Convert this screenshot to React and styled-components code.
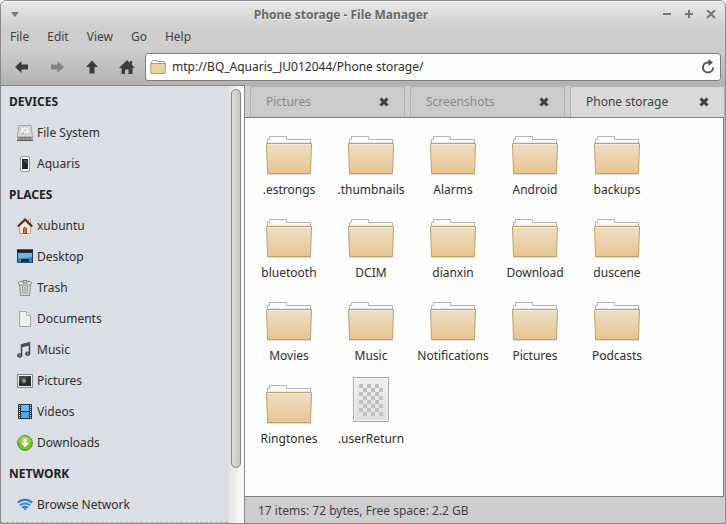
import React, { useState } from 'react';
import styled, { createGlobalStyle } from 'styled-components';

const GlobalStyle = createGlobalStyle`
  * {
    box-sizing: border-box;
  }
  body {
    margin: 0;
    background: #fff;
    font-family: 'Noto Sans', 'Open Sans', sans-serif;
    font-size: 12px;
    line-height: 18px;
    color: #2d2d2d;
  }
  button, input {
    font: inherit;
    color: inherit;
    border: 0;
    padding: 0;
    margin: 0;
    background: none;
  }
  svg {
    display: block;
    flex: none;
  }
`;

const places = [
  {
    title: 'DEVICES',
    items: [
      ['File System', 'disk'],
      ['Aquaris', 'phone'],
    ],
  },
  {
    title: 'PLACES',
    items: [
      ['xubuntu', 'home'],
      ['Desktop', 'desktop'],
      ['Trash', 'trash'],
      ['Documents', 'document'],
      ['Music', 'music'],
      ['Pictures', 'picture'],
      ['Videos', 'video'],
      ['Downloads', 'download'],
    ],
  },
  { title: 'NETWORK', items: [['Browse Network', 'wifi']] },
];

const folders = [
  '.estrongs',
  '.thumbnails',
  'Alarms',
  'Android',
  'backups',
  'bluetooth',
  'DCIM',
  'dianxin',
  'Download',
  'duscene',
  'Movies',
  'Music',
  'Notifications',
  'Pictures',
  'Podcasts',
  'Ringtones',
];

const placeIcons = {
  disk: (
    <>
      <path d="M2 .5h12l1.500 10.500v3.500H.5V11z" fill="#dcdcda" stroke="#a3a3a1" />
      <ellipse cx="8" cy="5.500" rx="5" ry="3.800" fill="#f2f2f2" stroke="#c4c4c2" />
      <circle cx="8.500" cy="5" r="1" fill="#bbb" />
      <path d="M7.500 6L4 9.500h3z" fill="#b0b0b0" />
      <path d="M1 11.500h14V15H1z" fill="#9a9a98" />
      <path d="M2 13h8M11 13h3" stroke="#6b6b6b" />
      <path d="M0 15.500h16" stroke="#555" />
    </>
  ),
  phone: (
    <>
      <rect x="3.500" y=".5" width="9" height="15" rx="1.500" fill="#fafafa" stroke="#9b9da0" />
      <rect x="5" y="3" width="6" height="10" fill="#232527" />
      <path d="M6 4h4v4z" fill="#55585a" />
    </>
  ),
  home: (
    <>
      <path d="M11.500 1.500h2V6h-2z" fill="#f3e6dc" stroke="#c79f88" />
      <path d="M2.500 8L8 3l5.500 5v7.500h-11z" fill="#f7ebdd" stroke="#c2a28c" />
      <path d="M.8 8.500L8 1.500l7.200 7" fill="none" stroke="#6e2023" strokeWidth="2" />
      <path d="M6.500 15.500V11q0-1.500 1.500-1.500T9.500 11v4.500z" fill="#d07c3c" stroke="#8d4a22" />
    </>
  ),
  desktop: (
    <>
      <rect width="16" height="14" rx="1" fill="#1d3a58" />
      <path d="M1 4h14v9H1z" fill="#4181b3" />
      <path d="M1 4h14v4q-7 2-14 1z" fill="#74b0d6" />
      <path d="M0 0h16v3H0z" fill="#1b1d1f" />
      <path d="M0 .5h16" stroke="#55595d" />
      <path d="M4 10h8v3H4z" fill="#1b2d40" />
      <path d="M0 13.500h16" stroke="#28517b" />
    </>
  ),
  trash: (
    <>
      <path d="M2.500 4h11l-1 11.500h-9z" fill="#d8d8d8" stroke="#8f8f8f" />
      <path d="M5.500 6l.5 8M8 6v8M10.500 6l-.5 8" stroke="#9a9a9a" />
      <rect x="1.500" y="1.500" width="13" height="3.500" rx="1.700" fill="#ececec" stroke="#858585" />
      <path d="M6 3V.6h4V3z" fill="#ddd" stroke="#777" />
    </>
  ),
  document: (
    <>
      <path d="M2.500.5h7l4 4v11h-11z" fill="#f1f1ef" stroke="#a2a2a2" />
      <path d="M9.500.5v4h4z" fill="#fff" stroke="#b5b5b5" />
    </>
  ),
  music: (
    <>
      <path d="M4.500 13V3L12.500 1v10" fill="none" stroke="#3c3f41" strokeWidth="1.400" />
      <path d="M4 2.200L13 0v3.500L4 5.600z" fill="#4c4f51" />
      <ellipse cx="2.700" cy="13.500" rx="2.200" ry="1.700" fill="#777" stroke="#333" />
      <ellipse cx="10.700" cy="11.700" rx="2.200" ry="1.700" fill="#777" stroke="#333" />
    </>
  ),
  picture: (
    <>
      <rect x=".5" y="1.500" width="15" height="13" fill="#f5f5f5" stroke="#898989" />
      <rect x="2" y="3" width="12" height="10" fill="#292b2d" />
      <path d="M2 3h12L2 9z" fill="#47494b" />
      <path d="M7 5.500v5M4.500 8h5M5.300 6.300l3.400 3.400M8.700 6.300L5.300 9.700" stroke="#a5a5a5" />
    </>
  ),
  video: (
    <>
      <rect x="1" y="0" width="14" height="15" fill="#263340" />
      <path d="M4 1h8v6H4z" fill="#6ab9f1" />
      <path d="M4 8h8v6H4z" fill="#51a4e5" />
      <path d="M2.500 1v13M13.500 1v13" stroke="#e4edf2" strokeDasharray="1 1" />
    </>
  ),
  download: (
    <>
      <circle cx="8" cy="8" r="7.400" fill="#70bf2b" stroke="#4b9317" />
      <path d="M1.500 7a6.500 6 0 0 1 13 0q-6 2-13 0z" fill="#91d64d" />
      <path d="M6.500 3.500h3V8h2.700L8 12.300 3.800 8h2.700z" fill="#fff" />
    </>
  ),
  wifi: (
    <g fill="none" stroke="#347fbd" strokeWidth="2.200">
      <path d="M.8 5.700q7.200-6 14.400 0" />
      <path d="M3 8.400q5-4.200 10 0" stroke="#4695d0" />
      <path d="M5.200 10.800q2.800-2.500 5.600 0" />
      <path d="M6.400 11.700q1.600-1.500 3.200 0L8 13.500z" fill="#347fbd" stroke="none" />
    </g>
  ),
};

function PlaceIcon({ name }) {
  return (
    <svg width="16" height="16" viewBox="0 0 16 16" aria-hidden="true">
      {placeIcons[name]}
    </svg>
  );
}

function FolderIcon() {
  return (
    <svg width="48" height="48" viewBox="0 0 48 48" aria-hidden="true">
      <defs>
        <linearGradient id="folder" x1="0" y1="0" x2="0" y2="1">
          <stop offset="0" stopColor="#eedfc6" />
          <stop offset="1" stopColor="#e8c590" />
        </linearGradient>
      </defs>
      <path d="M2 47.500h44" stroke="#ddd" />
      <path d="M2.500 17v-4.500h2v-3h17v3h24V17z" fill="#fbfbfb" stroke="#b5b5b8" />
      <path d="M3 15.500h42" stroke="#eaeaea" />
      <path d="M1.500 16.500h45l-1 30h-43z" fill="url(#folder)" stroke="#bea06b" />
      <path d="M2.500 17.500h43" stroke="#f6ebd8" />
    </svg>
  );
}

function SmallFolderIcon() {
  return (
    <svg width="16" height="16" viewBox="0 0 16 16" aria-hidden="true">
      <path d="M1.500 5V2.500h1v-1h5v1h7V5z" fill="#fff" stroke="#a9a9a9" />
      <path d="M.5 4.500h15l-.5 10H1z" fill="#ecd1a6" stroke="#bd9c68" />
    </svg>
  );
}

function UnknownFileIcon() {
  const squares = [];
  for (let y = 0; y < 8; y++) {
    for (let x = y % 2; x < 6; x += 2) {
      squares.push(
        <rect key={`${x}-${y}`} x={12 + x * 4} y={8 + y * 4} width="4" height="4" />,
      );
    }
  }
  return (
    <svg width="48" height="48" viewBox="0 0 48 48" aria-hidden="true">
      <defs>
        <linearGradient id="paper" x1="0" y1="0" x2="0" y2="1">
          <stop offset="0" stopColor="#f1f1f1" />
          <stop offset="1" stopColor="#dedede" />
        </linearGradient>
      </defs>
      <rect x="6.500" y="1.500" width="35" height="44" fill="url(#paper)" stroke="#a6a6a6" />
      <rect x="7.500" y="2.500" width="33" height="42" fill="none" stroke="#f8f8f8" />
      <g fill="#c0c0c0">{squares}</g>
    </svg>
  );
}

const toolIcons = {
  Back: 'M1 8l6.500-6v3.500H14v5H7.500V14z',
  Forward: 'M15 8L8.500 2v3.500H2v5h6.500V14z',
  Up: 'M8 1.500L14 8h-3.500v6.500h-5V8H2z',
  Home: 'M8 1L0 9h2.500v6H6v-4.500h3.500V15h4V9H16l-3-3.200V2h-2v2z',
};

function ToolIcon({ name }) {
  return (
    <svg width="16" height="16" viewBox="0 0 16 16" fill="currentColor" aria-hidden="true">
      <path d={toolIcons[name]} />
    </svg>
  );
}

function CloseIcon() {
  return (
    <svg width="10" height="10" viewBox="0 0 10 10" aria-hidden="true">
      <path d="M1.500 1.500l7 7M8.500 1.500l-7 7" stroke="currentColor" strokeWidth="3" />
    </svg>
  );
}

export default function App() {
  const [path, setPath] = useState('mtp://BQ_Aquaris_JU012044/Phone storage/');
  const [activeTab, setActiveTab] = useState('Phone storage');

  return (
    <>
      <GlobalStyle />
      <Window>
        <Header>
          <TitleBar>
            <WindowButton aria-label="Window menu">
              <svg width="10" height="10" viewBox="0 0 10 10">
                <path d="M1 2h8L5 7z" fill="currentColor" />
              </svg>
            </WindowButton>
            <Title>Phone storage - File Manager</Title>
            <WindowButton aria-label="Minimize">
              <svg width="10" height="10" viewBox="0 0 10 10">
                <path d="M1 4h8" stroke="currentColor" strokeWidth="2" />
              </svg>
            </WindowButton>
            <WindowButton aria-label="Maximize">
              <svg width="10" height="10" viewBox="0 0 10 10">
                <path d="M1 4h8M5 0v8" stroke="currentColor" strokeWidth="2" />
              </svg>
            </WindowButton>
            <WindowButton aria-label="Close">
              <svg width="10" height="10" viewBox="0 0 10 10">
                <path d="M1 0l8 8M9 0L1 8" stroke="currentColor" strokeWidth="2" />
              </svg>
            </WindowButton>
          </TitleBar>
          <MenuBar>
            {['File', 'Edit', 'View', 'Go', 'Help'].map((name) => (
              <MenuButton key={name}>{name}</MenuButton>
            ))}
          </MenuBar>
          <Toolbar>
            {['Back', 'Forward', 'Up', 'Home'].map((name) => (
              <ToolButton key={name} aria-label={name} disabled={name === 'Forward'}>
                <ToolIcon name={name} />
              </ToolButton>
            ))}
            <LocationBar>
              <SmallFolderIcon />
              <LocationInput
                aria-label="Location"
                value={path}
                onChange={(e) => setPath(e.target.value)}
              />
              <ReloadButton aria-label="Reload">
                <svg width="14" height="16" viewBox="0 0 14 16">
                  <path
                    d="M9 3.500H7A5 5 0 1 0 12 8.500"
                    fill="none"
                    stroke="currentColor"
                    strokeWidth="2"
                  />
                  <path d="M7.500 0l4.500 3.500L7.500 7z" fill="currentColor" />
                </svg>
              </ReloadButton>
            </LocationBar>
          </Toolbar>
        </Header>

        <Body>
          <SidePane>
            <Sidebar>
              {places.map((group) => (
                <section key={group.title}>
                  <GroupTitle>{group.title}</GroupTitle>
                  {group.items.map(([label, icon]) => (
                    <PlaceLink key={label} href={`#${label}`}>
                      <PlaceIcon name={icon} />
                      {label}
                    </PlaceLink>
                  ))}
                </section>
              ))}
            </Sidebar>
            <ScrollTrack>
              <ScrollThumb />
            </ScrollTrack>
          </SidePane>

          <Main>
            <Tabs>
              {['Pictures', 'Screenshots', 'Phone storage'].map((name) => (
                <Tab key={name} $active={name === activeTab}>
                  <TabButton onClick={() => setActiveTab(name)}>{name}</TabButton>
                  <TabClose aria-label={`Close ${name}`}>
                    <CloseIcon />
                  </TabClose>
                </Tab>
              ))}
            </Tabs>
            <FileGrid>
              {folders.map((name) => (
                <FileItem key={name}>
                  <FolderIcon />
                  {name}
                </FileItem>
              ))}
              <FileItem>
                <UnknownFileIcon />
                .userReturn
              </FileItem>
            </FileGrid>
            <StatusBar>17 items: 72 bytes, Free space: 2.2 GB</StatusBar>
          </Main>
        </Body>
      </Window>
    </>
  );
}

const Window = styled.div`
  display: flex;
  flex-direction: column;
  min-height: 100vh;
  border: 1px solid #8a8a8a;
  border-radius: 6px 6px 0 0;
  background: #cecece;
  overflow: hidden;
`;

const Header = styled.header`
  background: linear-gradient(#e8e8e8, #cecece 26px, #cecece 46px, #b2b2b2);
  border-top: 1px solid #f8f8f8;
`;

const TitleBar = styled.div`
  display: flex;
  align-items: center;
  height: 25px;
  padding: 0 3px;
`;

const Title = styled.h1`
  flex: 1;
  margin: 0;
  font-size: 12px;
  font-weight: bold;
  line-height: 24px;
  text-align: center;
  color: #686868;
  text-shadow: 0 1px #eee;
`;

const WindowButton = styled.button`
  display: flex;
  align-items: center;
  justify-content: center;
  width: 22px;
  height: 22px;
  color: #757575;
`;

const MenuBar = styled.nav`
  display: flex;
  gap: 18px;
  height: 20px;
  padding: 0 9px;
`;

const MenuButton = styled.button`
  color: #3f3f3f;
`;

const Toolbar = styled.div`
  display: flex;
  align-items: center;
  padding: 6px 4px 4px 3px;
`;

const ToolButton = styled.button`
  display: flex;
  align-items: center;
  justify-content: center;
  width: 35px;
  height: 28px;
  color: ${(props) => (props.disabled ? '#858585' : '#3b3b3b')};
`;

const LocationBar = styled.div`
  display: flex;
  flex: 1;
  align-items: center;
  gap: 6px;
  height: 28px;
  margin-left: 1px;
  padding: 0 5px 0 4px;
  border: 1px solid #7d7d7d;
  border-radius: 3px;
  background: #fdfdfd;
`;

const LocationInput = styled.input`
  flex: 1;
  min-width: 0;
  outline: 0;
`;

const ReloadButton = styled.button`
  color: #555;
`;

const Body = styled.div`
  display: flex;
  flex: 1;
`;

const SidePane = styled.aside`
  display: flex;
  width: 243px;
  border-top: 1px solid #858585;
  background: #dadfe6;
`;

const Sidebar = styled.nav`
  flex: 1;
  border-bottom: 1px dashed #aaafb5;
`;

const GroupTitle = styled.h2`
  margin: 0;
  padding-left: 8px;
  font-size: 12px;
  line-height: 31px;
  color: #222;
`;

const PlaceLink = styled.a`
  display: flex;
  align-items: center;
  gap: 4px;
  height: 31px;
  padding-left: 16px;
  color: #2d2d2d;
  text-decoration: none;
`;

const ScrollTrack = styled.div`
  width: 16px;
  padding: 3px;
  background: linear-gradient(90deg, #e2e2e2, #fcfcfc);
`;

const ScrollThumb = styled.div`
  height: 88%;
  border: 1px solid #858585;
  border-radius: 5px;
  background: linear-gradient(90deg, #dedede, #c4c4c4);
`;

const Main = styled.main`
  display: flex;
  flex: 1;
  flex-direction: column;
  min-width: 0;
  border-left: 1px solid #858585;
`;

const Tabs = styled.div`
  display: flex;
  gap: 5px;
  padding-left: 5px;
  background: #cecece;
  border-top: 1px solid #b2b2b2;
`;

const Tab = styled.div`
  display: flex;
  flex: 1;
  align-items: center;
  height: 31px;
  padding: 0 15px;
  border: 1px solid #b2b2b2;
  border-bottom: 0;
  border-radius: 3px 3px 0 0;
  background: ${(props) => (props.$active ? '#d9d9d9' : '#cbcbcb')};
  color: ${(props) => (props.$active ? '#3f3f3f' : '#8a8a8a')};
`;

const TabButton = styled.button`
  flex: 1;
  text-align: left;
`;

const TabClose = styled.button`
  color: #3f3f3f;
`;

const FileGrid = styled.div`
  display: grid;
  flex: 1;
  grid-template-columns: repeat(auto-fill, 82px);
  grid-auto-rows: 83px;
  align-content: start;
  margin-right: 1px;
  padding: 9px 3px;
  border: 1px solid #7d7d7d;
  border-left: 0;
  background: #fdfdfd;
`;

const FileItem = styled.button`
  display: flex;
  flex-direction: column;
  align-items: center;
  gap: 6px;
`;

const StatusBar = styled.footer`
  padding: 5px 13px 3px;
  color: #3f3f3f;
`;
